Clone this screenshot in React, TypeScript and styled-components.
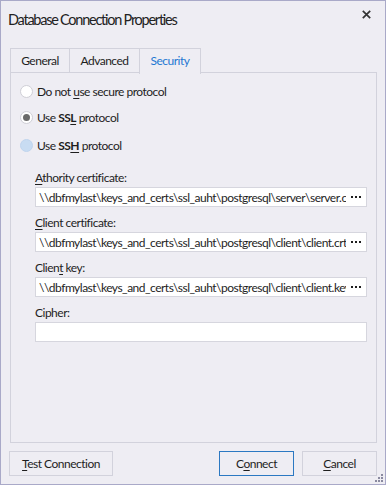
import React from "react";
import styled, { createGlobalStyle, css } from "styled-components";

const Global = createGlobalStyle`
  html, body { margin: 0; padding: 0; background: #eeedf3; }
  * { box-sizing: border-box; }
`;

const FONT = `"Segoe UI", Lato, "Liberation Sans", sans-serif`;

const Window = styled.div`
  width: 386px;
  height: 485px;
  border: 1px solid #a9a9c8;
  background: #eeedf3;
  display: flex;
  flex-direction: column;
  font-family: ${FONT};
  letter-spacing: -0.5px;
  color: #1e1e1e;
  position: relative;
`;

const TitleBar = styled.div`
  height: 47px;
  display: flex;
  align-items: flex-start;
  justify-content: space-between;
  padding: 9px 14px 0 7px;
`;

const Title = styled.div`
  font-size: 14.5px;
  line-height: 20px;
  letter-spacing: -1.25px;
  color: #222;
`;

const Close = styled.div`
  width: 9px;
  height: 9px;
  margin-top: 0;
  display: flex;
`;

const TabsArea = styled.div`
  margin: 0 8px 0 9px;
  display: flex;
  flex-direction: column;
`;

const TabList = styled.div`
  display: flex;
  height: 25px;
`;

const Tab = styled.div<{ $active?: boolean; $w: number }>`
  width: ${(p) => p.$w}px;
  height: 25px;
  border: 1px solid #d2d2dc;
  border-right: none;
  font-size: 12px;
  line-height: 23px;
  text-align: center;
  color: #1e1e1e;
  background: #eeedf3;
  ${(p) =>
    p.$active &&
    css`
      color: #1e78d2;
      border-right: 1px solid #d2d2dc;
      border-bottom: none;
      height: 26px;
      position: relative;
      z-index: 1;
    `}
`;

const TabFiller = styled.div`
  flex: 1;
  border-bottom: 1px solid #d2d2dc;
`;

const Panel = styled.div`
  height: 371px;
  margin-top: -1px;
  border: 1px solid #d2d2dc;
  padding: 8px 9px 0 9px;
  display: flex;
  flex-direction: column;
`;

const RadioRow = styled.div<{ $mt: number }>`
  display: flex;
  align-items: center;
  gap: 4px;
  height: 20px;
  margin-top: ${(p) => p.$mt}px;
  font-size: 12px;
`;

const RadioCircle = styled.div<{ $state: "off" | "on" | "hover" }>`
  width: 13px;
  height: 13px;
  border-radius: 50%;
  display: flex;
  align-items: center;
  justify-content: center;
  ${(p) =>
    p.$state === "hover"
      ? css`
          background: #c8dcf2;
          border: 1px solid #c0d5ee;
        `
      : css`
          background: #fff;
          border: 1px solid #cfcfd6;
        `}
`;

const Dot = styled.div`
  width: 7px;
  height: 7px;
  border-radius: 50%;
  background: #6a6a6a;
`;

const U = styled.span`
  text-decoration: underline;
  text-underline-offset: 2px;
`;

const B = styled.b`
  font-weight: 700;
`;

const Fields = styled.div`
  display: flex;
  flex-direction: column;
  padding-left: 15px;
  margin-top: 15px;
`;

const Label = styled.div`
  font-size: 12px;
  line-height: 16px;
  height: 16px;
  margin-bottom: 1px;
`;

const Input = styled.div`
  height: 20px;
  background: #fff;
  border: 1px solid #d6d6de;
  display: flex;
  align-items: center;
  padding: 0 3px 0 3px;
  font-size: 12px;
  margin-bottom: 8px;
  overflow: hidden;
`;

const InputText = styled.div`
  flex: 1;
  white-space: nowrap;
  overflow: hidden;
  min-width: 0;
`;

const Ellipsis = styled.div`
  width: 14px;
  flex: none;
  display: flex;
  justify-content: center;
  gap: 2px;
  margin-left: 3px;
  span {
    width: 2px;
    height: 2px;
    background: #1e1e1e;
  }
`;

const Footer = styled.div`
  display: flex;
  align-items: flex-start;
  padding: 8px 8px 0 8px;
`;

const Button = styled.div<{ $w: number; $primary?: boolean; $ml?: number }>`
  width: ${(p) => p.$w}px;
  height: 25px;
  border: 1px solid ${(p) => (p.$primary ? "#2b78c2" : "#d2d2dc")};
  font-size: 12px;
  line-height: 23px;
  text-align: center;
  margin-left: ${(p) => p.$ml ?? 0}px;
`;

const Grip = styled.div`
  position: absolute;
  right: 2px;
  bottom: 2px;
  display: grid;
  grid-template-columns: repeat(3, 2px);
  grid-template-rows: repeat(3, 2px);
  gap: 1px;
`;

const GripDot = styled.span<{ $on: boolean }>`
  background: ${(p) => (p.$on ? "#8a8aa0" : "transparent")};
`;

const Dots = () => (
  <Ellipsis>
    <span />
    <span />
    <span />
  </Ellipsis>
);

const gripMap = [0, 0, 1, 0, 1, 1, 1, 1, 1];

export default function App() {
  return (
    <>
      <Global />
      <Window>
        <TitleBar>
          <Title>Database Connection Properties</Title>
          <Close>
            <svg width="9" height="9" viewBox="0 0 9 9">
              <path d="M0.8 0.8 L8.2 8.2 M8.2 0.8 L0.8 8.2" stroke="#333" strokeWidth="1.7" />
            </svg>
          </Close>
        </TitleBar>
        <TabsArea>
          <TabList>
            <Tab $w={59}>General</Tab>
            <Tab $w={70}>Advanced</Tab>
            <Tab $w={62} $active>
              Security
            </Tab>
            <TabFiller />
          </TabList>
          <Panel>
            <RadioRow $mt={0}>
              <RadioCircle $state="off" />
              <span>
                Do not <U>u</U>se secure protocol
              </span>
            </RadioRow>
            <RadioRow $mt={6}>
              <RadioCircle $state="on">
                <Dot />
              </RadioCircle>
              <span>
                Use <B>SS<U>L</U></B> protocol
              </span>
            </RadioRow>
            <RadioRow $mt={8}>
              <RadioCircle $state="hover" />
              <span>
                Use <B>SS<U>H</U></B> protocol
              </span>
            </RadioRow>
            <Fields>
              <Label>
                <U>A</U>thority certificate:
              </Label>
              <Input>
                <InputText>\\dbfmylast\keys_and_certs\ssl_auht\postgresql\server\server.crt</InputText>
                <Dots />
              </Input>
              <Label>
                <U>C</U>lient certificate:
              </Label>
              <Input>
                <InputText>\\dbfmylast\keys_and_certs\ssl_auht\postgresql\client\client.crt</InputText>
                <Dots />
              </Input>
              <Label>
                Clien<U>t</U> key:
              </Label>
              <Input>
                <InputText>\\dbfmylast\keys_and_certs\ssl_auht\postgresql\client\client.key</InputText>
                <Dots />
              </Input>
              <Label>Cipher:</Label>
              <Input />
            </Fields>
          </Panel>
        </TabsArea>
        <Footer>
          <Button $w={104}>
            <U>T</U>est Connection
          </Button>
          <Button $w={75} $primary $ml={106}>
            C<U>o</U>nnect
          </Button>
          <Button $w={75} $ml={8}>
            <U>C</U>ancel
          </Button>
        </Footer>
        <Grip>
          {gripMap.map((on, i) => (
            <GripDot key={i} $on={!!on} />
          ))}
        </Grip>
      </Window>
    </>
  );
}
